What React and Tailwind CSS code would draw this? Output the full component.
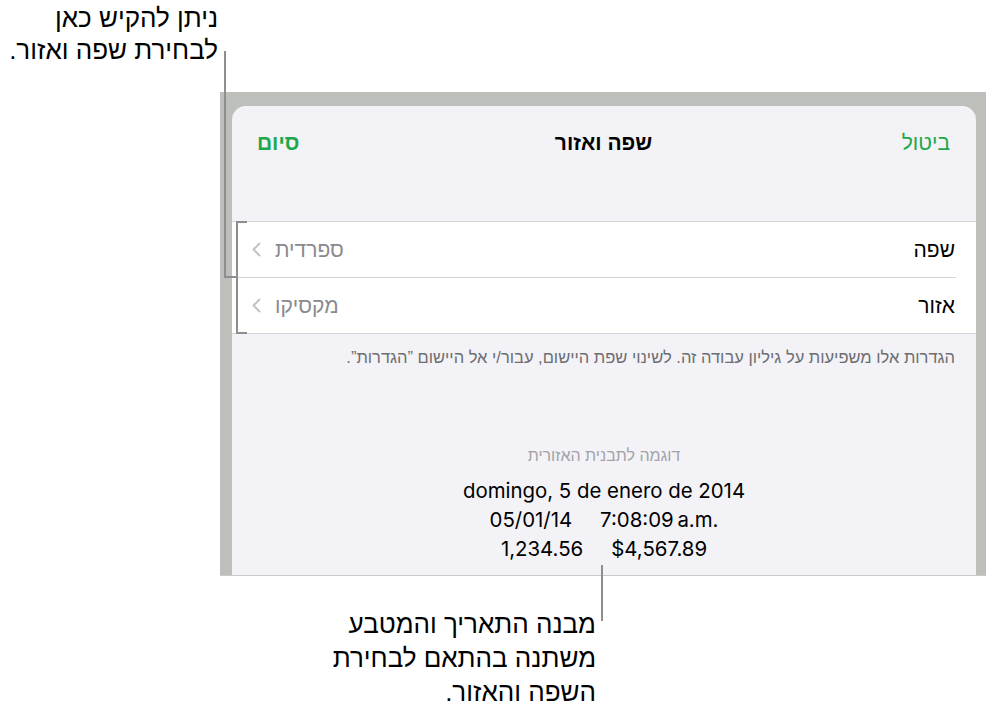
export default function App() {
  const ui = { fontFamily: '"Liberation Sans", "DejaVu Sans", sans-serif' };
  const latin = { fontFamily: 'Inter, Roboto, "Liberation Sans", sans-serif' };

  return (
    <div className="relative w-[988px] h-[710px] bg-white overflow-hidden" style={ui}>
      {/* top callout text */}
      <div dir="rtl" className="h-[92px] w-[218px] pt-[2px] text-[26px] leading-[32px] text-black text-right whitespace-nowrap">
        <div>ניתן להקיש כאן</div>
        <div>לבחירת שפה ואזור.</div>
      </div>

      {/* screenshot frame */}
      <div className="ml-[220px] w-[766px] h-[484px] bg-[#bdbfbb] pt-[14px] pl-[12px] pr-[10px] border-b border-[#c9cac8]">
        <div dir="rtl" className="h-full bg-[#f2f2f7] rounded-t-[14px] flex flex-col">
          {/* header */}
          <div className="h-[115px] pt-[25px] flex items-start justify-between pr-[26px] pl-[25px]">
            <span className="w-[80px] text-[21px] text-[#1fa84b] leading-[24px]">ביטול</span>
            <span className="text-[21px] font-bold text-black leading-[24px]">שפה ואזור</span>
            <span className="w-[80px] text-left text-[21px] font-bold text-[#1fa84b] leading-[24px]">סיום</span>
          </div>

          {/* list */}
          <div className="bg-white border-y border-[#d4d4d7]">
            <div className="h-[55px] flex items-center justify-between pr-[21px] pl-[20px]">
              <span className="text-[21px] text-black">שפה</span>
              <span className="flex items-center gap-[14px] text-[21px] text-[#8a8a8e]">
                ספרדית
                <Chevron />
              </span>
            </div>
            <div className="h-px bg-[#d4d4d7] mr-[20px]" />
            <div className="h-[55px] flex items-center justify-between pr-[21px] pl-[20px]">
              <span className="text-[21px] text-black">אזור</span>
              <span className="flex items-center gap-[14px] text-[21px] text-[#8a8a8e]">
                מקסיקו
                <Chevron />
              </span>
            </div>
          </div>

          {/* footer note */}
          <div className="pt-[14px] pr-[21px] text-[16.5px] leading-[18px] text-[#6d6d72] whitespace-nowrap">
            הגדרות אלו משפיעות על גיליון עבודה זה. לשינוי שפת היישום, עבור/י אל היישום ”הגדרות”.
          </div>

          {/* sample */}
          <div className="pt-[81px] flex flex-col items-center">
            <div className="text-[16px] leading-[18px] text-[#a3a3a8]">דוגמה לתבנית האזורית</div>
            <div dir="ltr" className="mt-[11px] flex flex-col items-center text-[20.4px] leading-[29px] text-black" style={latin}>
              <div>domingo, 5 de enero de 2014</div>
              <div className="flex gap-[28px]">
                <span>05/01/14</span>
                <span>7:08:09&#8201;a.m.</span>
              </div>
              <div className="flex gap-[28px]">
                <span>1,234.56</span>
                <span>$4,567.89</span>
              </div>
            </div>
          </div>
        </div>
      </div>

      {/* bottom callout text */}
      <div dir="rtl" className="w-[596px] pt-[31px] text-[26px] leading-[34px] text-black text-right whitespace-nowrap">
        <div>מבנה התאריך והמטבע</div>
        <div>משתנה בהתאם לבחירת</div>
        <div>השפה והאזור.</div>
      </div>

      {/* callout lines */}
      <div className="absolute left-[224px] top-[51px] w-[2px] h-[227px] bg-[#8e8e8e]" />
      <div className="absolute left-[224px] top-[276px] w-[14px] h-[2px] bg-[#8e8e8e]" />
      <div className="absolute left-[236px] top-[221px] w-[2px] h-[113px] bg-[#8e8e8e]" />
      <div className="absolute left-[236px] top-[221px] w-[11px] h-[2px] bg-[#8e8e8e]" />
      <div className="absolute left-[236px] top-[332px] w-[11px] h-[2px] bg-[#8e8e8e]" />
      <div className="absolute left-[601px] top-[565px] w-[2px] h-[56px] bg-[#8e8e8e]" />
    </div>
  );
}

function Chevron() {
  return (
    <svg width="9" height="15" viewBox="0 0 9 15" fill="none">
      <path d="M7.5 1.5L1.5 7.5L7.5 13.5" stroke="#c4c4c7" strokeWidth="2" strokeLinecap="round" strokeLinejoin="round" />
    </svg>
  );
}
